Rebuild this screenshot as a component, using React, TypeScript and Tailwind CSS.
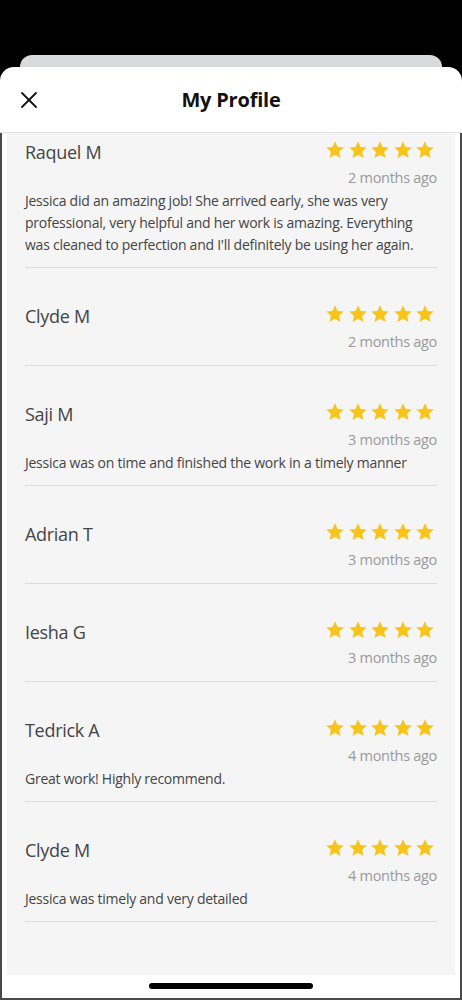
import React from "react";

const reviews = [
  {
    name: "Raquel M",
    time: "2 months ago",
    text: "Jessica did an amazing job! She arrived early, she was very professional, very helpful and her work is amazing. Everything was cleaned to perfection and I'll definitely be using her again.",
  },
  { name: "Clyde M", time: "2 months ago", text: "" },
  { name: "Saji M", time: "3 months ago", text: "Jessica was on time and finished the work in a timely manner" },
  { name: "Adrian T", time: "3 months ago", text: "" },
  { name: "Iesha G", time: "3 months ago", text: "" },
  { name: "Tedrick A", time: "4 months ago", text: "Great work! Highly recommend." },
  { name: "Clyde M", time: "4 months ago", text: "Jessica was timely and very detailed" },
];

function Star() {
  return (
    <svg width="20" height="20" viewBox="0 0 24 24">
      <path
        d="M12 1.5l3.1 6.9 7.4.7-5.6 5 1.7 7.4L12 17.6l-6.6 3.9 1.7-7.4-5.6-5 7.4-.7z"
        fill="#f8c41a"
      />
    </svg>
  );
}

export default function App() {
  return (
    <div
      className="w-[462px] h-[1000px] bg-black flex flex-col overflow-hidden"
      style={{ fontFamily: "'Open Sans', sans-serif" }}
    >
      {/* sheet behind */}
      <div className="mt-[55px] mx-[20px] h-[20px] bg-[#d8dadb] rounded-t-[12px] shrink-0" />
      {/* main sheet */}
      <div className="-mt-[8px] flex-1 bg-white rounded-t-[14px] flex flex-col min-h-0">
        {/* Header */}
        <div className="h-[66px] relative flex items-center justify-center border-b border-[#e2e2e2] shrink-0">
          <button className="absolute left-[19px] top-[23px]" aria-label="Close">
            <svg width="20" height="20" viewBox="0 0 20 20" fill="none" stroke="#111" strokeWidth="1.8" strokeLinecap="round">
              <line x1="3" y1="3" x2="17" y2="17" />
              <line x1="17" y1="3" x2="3" y2="17" />
            </svg>
          </button>
          <h1 className="text-[20px] font-bold text-[#111] tracking-[-0.2px]">My Profile</h1>
        </div>
        {/* Body */}
        <div className="flex-1 flex flex-col border-x-2 border-b-2 border-[#4a4a4a] px-[5px] min-h-0">
          <div className="flex-1 bg-[#f5f5f5] px-[18px] overflow-hidden">
            {reviews.map((r, i) => (
              <div
                key={i}
                className={`border-b border-[#dcdcdc] ${i === 0 ? "pt-[7px]" : "pt-[36px]"} ${r.text ? "pb-[11px]" : "pb-[13px]"}`}
              >
                <div className="flex justify-between">
                  <div className="text-[18px] leading-[24px] text-[#444] tracking-[-0.3px]">{r.name}</div>
                  <div className="flex flex-col items-end">
                    <div className="flex gap-[2.5px] h-[20px] mr-[2px]">
                      <Star />
                      <Star />
                      <Star />
                      <Star />
                      <Star />
                    </div>
                    <div className="mt-[8px] text-[14.5px] leading-[20px] text-[#9a9a9a] tracking-[-0.3px]">{r.time}</div>
                  </div>
                </div>
                {r.text && (
                  <p className="mt-[2px] text-[14px] leading-[22px] text-[#444] tracking-[-0.25px]">{r.text}</p>
                )}
              </div>
            ))}
          </div>
          <div className="h-[23px] bg-white flex items-start justify-center shrink-0">
            <div className="mt-[8px] w-[164px] h-[6px] rounded-full bg-black" />
          </div>
        </div>
      </div>
    </div>
  );
}
